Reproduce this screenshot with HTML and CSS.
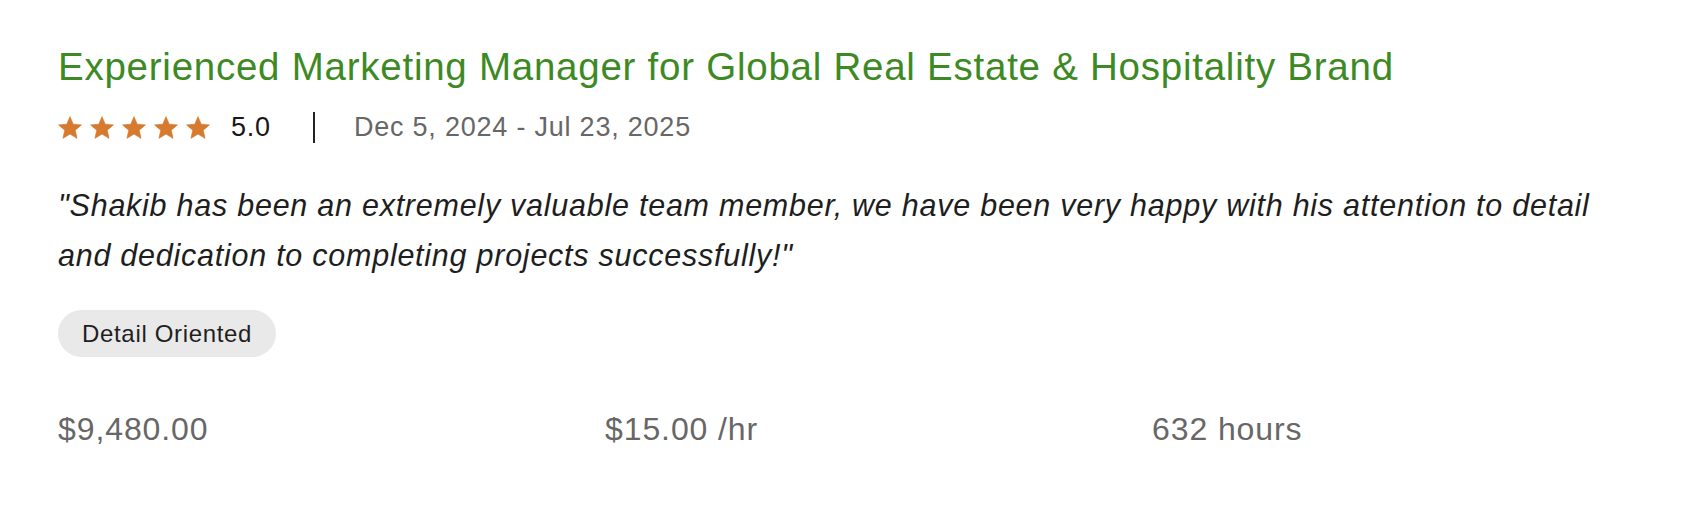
FILE: index.html
```html
<!DOCTYPE html>
<html lang="en">
<head>
<meta charset="utf-8">
<title>Review</title>
<link rel="stylesheet" href="styles.css">
</head>
<body>
<article class="card">
  <h2 class="title">Experienced Marketing Manager for Global Real Estate &amp; Hospitality Brand</h2>
  <div class="meta">
    <div class="stars">
      <svg class="star" viewBox="1.5 1.5 21 20"><path d="M12 17.27L18.18 21l-1.64-7.03L22 9.24l-7.19-.61L12 2 9.19 8.63 2 9.24l5.46 4.73L5.82 21z"/></svg>
      <svg class="star" viewBox="1.5 1.5 21 20"><path d="M12 17.27L18.18 21l-1.64-7.03L22 9.24l-7.19-.61L12 2 9.19 8.63 2 9.24l5.46 4.73L5.82 21z"/></svg>
      <svg class="star" viewBox="1.5 1.5 21 20"><path d="M12 17.27L18.18 21l-1.64-7.03L22 9.24l-7.19-.61L12 2 9.19 8.63 2 9.24l5.46 4.73L5.82 21z"/></svg>
      <svg class="star" viewBox="1.5 1.5 21 20"><path d="M12 17.27L18.18 21l-1.64-7.03L22 9.24l-7.19-.61L12 2 9.19 8.63 2 9.24l5.46 4.73L5.82 21z"/></svg>
      <svg class="star" viewBox="1.5 1.5 21 20"><path d="M12 17.27L18.18 21l-1.64-7.03L22 9.24l-7.19-.61L12 2 9.19 8.63 2 9.24l5.46 4.73L5.82 21z"/></svg>
    </div>
    <span class="rating">5.0</span>
    <span class="divider"></span>
    <span class="date">Dec 5, 2024 - Jul 23, 2025</span>
  </div>
  <p class="quote">"Shakib has been an extremely valuable team member, we have been very happy with his attention to detail and dedication to completing projects successfully!"</p>
  <div class="tags"><span class="tag">Detail Oriented</span></div>
  <div class="stats">
    <span class="stat">$9,480.00</span>
    <span class="stat">$15.00 /hr</span>
    <span class="stat">632 hours</span>
  </div>
</article>
</body>
</html>
```
FILE: styles.css
```css
html, body {
  margin: 0;
  padding: 0;
  background: #ffffff;
}

.card {
  padding: 45px 58px 0 58px;
  font-family: "Liberation Sans", Arial, sans-serif;
  color: #1f1f1f;
}

.title {
  margin: 0;
  font-size: 38.5px;
  line-height: 44px;
  letter-spacing: 0.75px;
  font-weight: 400;
  color: #3d8a24;
}

.meta {
  display: flex;
  align-items: center;
  height: 32px;
  margin-top: 22px;
}

.stars {
  display: flex;
  gap: 8px;
}

.star {
  width: 24px;
  height: 23px;
  fill: #d67a2e;
  stroke: #d67a2e;
  stroke-width: 0.6;
  stroke-linejoin: round;
}

.rating {
  margin-left: 21px;
  font-size: 27px;
  letter-spacing: 0.8px;
  color: #181818;
}

.divider {
  width: 2px;
  height: 31px;
  background: #222222;
  margin: 0 39px 0 42px;
}

.date {
  font-size: 27px;
  letter-spacing: 0.78px;
  color: #676767;
}

.quote {
  margin: 37px 0 0 0;
  max-width: 1560px;
  font-size: 30.5px;
  line-height: 50px;
  letter-spacing: 0.75px;
  font-style: italic;
  color: #1e1e1e;
}

.tags {
  margin-top: 30px;
  display: flex;
}

.tag {
  display: inline-flex;
  align-items: center;
  height: 47px;
  padding: 0 24px;
  border-radius: 24px;
  background: #e9e9e9;
  font-size: 24px;
  letter-spacing: 0.67px;
  color: #1f1f1f;
}

.stats {
  display: grid;
  grid-template-columns: repeat(3, 1fr);
  column-gap: 65px;
  margin-top: 54px;
  font-size: 32px;
  line-height: 36px;
  letter-spacing: 0.9px;
  color: #676767;
}
```
